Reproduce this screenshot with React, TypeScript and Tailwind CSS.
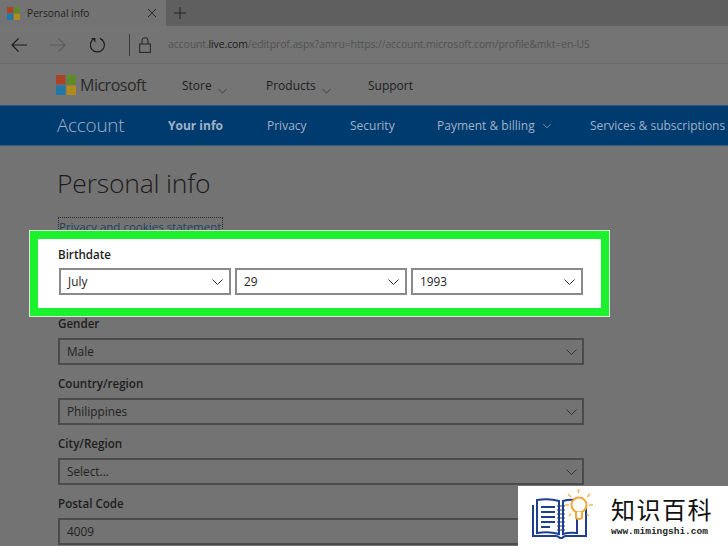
const sans = { fontFamily: '"Open Sans", "Noto Sans", sans-serif' };

function Chevron({ className = "stroke-[#333]" }: { className?: string }) {
  return (
    <svg width="11" height="6" viewBox="0 0 11 6" fill="none" className={className}>
      <path d="M.5 .5l5 5 5-5" strokeWidth="1" />
    </svg>
  );
}

function Select({ value, className = "" }: { value: string; className?: string }) {
  return (
    <div className={`h-[27px] flex items-center justify-between border-2 border-[#4b4b4b] pl-[7px] pr-[5px] text-[11.8px] text-[#222] ${className}`}>
      <span className="mt-[1px]">{value}</span>
      <Chevron />
    </div>
  );
}

function Field({ label, value, arrow = true }: { label: string; value: string; arrow?: boolean }) {
  return (
    <div className="flex flex-col h-[60px]">
      <div className="h-[23px] text-[11.6px] font-semibold text-[#1d1d1d] leading-[17px]">{label}</div>
      {arrow ? (
        <Select value={value} />
      ) : (
        <div className="h-[27px] flex items-center border-2 border-[#4b4b4b] pl-[7px] text-[11.8px] text-[#222]">{value}</div>
      )}
    </div>
  );
}

function WinLogo({ size }: { size: number }) {
  return (
    <svg width={size} height={size} viewBox="0 0 20 20">
      <rect width="9.5" height="9.5" fill="#a8432c" />
      <rect x="10.5" width="9.5" height="9.5" fill="#5f8a2a" />
      <rect y="10.5" width="9.5" height="9.5" fill="#1f78a8" />
      <rect x="10.5" y="10.5" width="9.5" height="9.5" fill="#b08a1c" />
    </svg>
  );
}

function TabStrip() {
  return (
    <div className="h-[26px] flex bg-[#5f5f5f]">
      <div className="w-[166px] flex items-center bg-[#737373] pl-[7px] pr-[9px]">
        <WinLogo size={13} />
        <span className="ml-[7px] mt-[1px] flex-1 text-[10.2px] text-[#222]">Personal info</span>
        <svg width="10" height="10" viewBox="0 0 10 10" stroke="#2a2a2a" strokeWidth="1"><path d="M1 1l8 8M9 1l-8 8" /></svg>
      </div>
      <div className="flex items-center pl-[8px]">
        <svg width="12" height="12" viewBox="0 0 12 12" stroke="#222" strokeWidth="1"><path d="M6 0v12M0 6h12" /></svg>
      </div>
    </div>
  );
}

function AddressBar() {
  return (
    <div className="h-[38px] flex items-center bg-[#747474] border-b border-[#6a6a6a] pl-[11px]">
      <svg width="16" height="14" viewBox="0 0 16 14" fill="none" stroke="#1c1c1c" strokeWidth="1.1"><path d="M16 7H1M7.5 .5L1 7l6.5 6.5" /></svg>
      <svg className="ml-[23px]" width="16" height="14" viewBox="0 0 16 14" fill="none" stroke="#5a5a5a" strokeWidth="1.1"><path d="M0 7h15M8.5 .5L15 7l-6.5 6.5" /></svg>
      <svg className="ml-[24px]" width="16" height="16" viewBox="0 0 16 16" fill="none" stroke="#1c1c1c" strokeWidth="1.2"><path d="M4.5 1.5A7 7 0 1 0 10 1.4M1.6 1.6l3.2 0 0 3.4" /></svg>
      <div className="ml-[23px] w-px h-[22px] bg-[#3c3c3c]" />
      <svg className="ml-[9px]" width="12" height="16" viewBox="0 0 12 16" fill="none" stroke="#2c2c2c" strokeWidth="1.1"><rect x=".6" y="7" width="10.8" height="8.4" /><path d="M3 7V3.8a3 3 0 0 1 6 0V7" /></svg>
      <div className="ml-[17px] mt-[1px] text-[10.45px] tracking-[-0.1px] text-[#525252] whitespace-nowrap">
        account.<span className="text-[#1a1a1a]">live.com</span>/editprof.aspx?amru=https://account.microsoft.com/profile&amp;mkt=en-US
      </div>
    </div>
  );
}

function SiteHeader() {
  return (
    <div className="h-[41px] flex items-center bg-[#757575] pl-[56px] text-[12px] text-[#1e1e1e]">
      <WinLogo size={20} />
      <span className="ml-[4px] w-[102px] text-[16px] font-medium tracking-[-0.5px] text-[#2a2a2a]">Microsoft</span>
      <span className="mt-[2px] flex items-end gap-[6px] w-[84px]">Store<Chevron className="stroke-[#333] mb-[1px] w-[9px]" /></span>
      <span className="mt-[2px] flex items-end gap-[6px] w-[102px]">Products<Chevron className="stroke-[#333] mb-[1px] w-[9px]" /></span>
      <span className="mt-[2px]">Support</span>
    </div>
  );
}

function AccountNav() {
  return (
    <div className="h-[41px] flex items-center overflow-hidden whitespace-nowrap bg-[#003b70] border-y border-[#2d5a82] pl-[57px] text-[12px] text-[#9fb2c6]">
      <span className="w-[111px] text-[19px] font-light tracking-[-0.3px]">Account</span>
      <span className="w-[99px] font-bold text-[12px]">Your info</span>
      <span className="w-[83px]">Privacy</span>
      <span className="w-[87px]">Security</span>
      <span className="w-[153px] flex items-center gap-[8px]">Payment &amp; billing<Chevron className="stroke-[#9fb2c6] w-[8px]" /></span>
      <span>Services &amp; subscriptions</span>
    </div>
  );
}

function Highlight() {
  return (
    <div className="absolute left-[29px] top-[230px] w-[581px] h-[87px] border border-[#d8f0d8]">
      <div className="h-full border-[8px] border-[#1bf22d] bg-white pl-[20px] pt-[6px] pr-[18px]">
        <div className="h-[23px] text-[11.6px] font-semibold text-[#1d1d1d] leading-[20px]">Birthdate</div>
        <div className="flex gap-[4px] text-[11.8px]">
          <HighlightSelect value="July" className="w-[172px] ml-[1px]" />
          <HighlightSelect value="29" className="w-[172px]" />
          <HighlightSelect value="1993" className="w-[172px]" />
        </div>
      </div>
    </div>
  );
}

function HighlightSelect({ value, className }: { value: string; className: string }) {
  return (
    <div className={`h-[27px] flex items-center justify-between border-2 border-[#8a8a8a] pl-[7px] pr-[6px] text-[#222] ${className}`}>
      <span className="mt-[1px]">{value}</span>
      <Chevron />
    </div>
  );
}

function WatermarkLogo() {
  return (
    <div className="absolute right-0 bottom-0 w-[210px] h-[60px] bg-white flex items-center pl-[14px]">
      <svg width="64" height="60" viewBox="0 0 64 60" fill="none">
        <path d="M1 19v31h23q2 0 4 2h2q2-2 4-2h20V19" stroke="#1e3f8f" strokeWidth="2" />
        <path d="M5 14q12-2 22 1v33q-10-3-22-1zM31 15q6-2 14-1v33q-8-1-14 1z" stroke="#1e3f8f" strokeWidth="2" />
        <path d="M9 21h14M9 26h14M9 31h14M9 36h14M9 41h9" stroke="#1e3f8f" strokeWidth="2.2" />
        <path d="M25 20h8M25 24h8M25 28h8M25 32h8M25 36h8M25 40h8M25 44h8" stroke="#1e3f8f" strokeWidth="1.2" />
        <circle cx="47" cy="19" r="7.5" fill="#fff" stroke="#f2a93b" strokeWidth="2" />
        <path d="M44 26v6q3 2 6 0v-6" fill="#fff" stroke="#f2a93b" strokeWidth="2" />
        <path d="M46.500 3v4M36 8l3 3M58 8l-3 3M33 19h4M57 19h4M37 30l2-2M57 30l-2-2" stroke="#f5b95c" strokeWidth="1.6" />
      </svg>
      <div className="ml-[15px] flex flex-col">
        <span className="text-[24px] leading-[30px] tracking-[1.5px] text-[#111]" style={{ fontFamily: '"Noto Sans CJK SC", sans-serif' }}>知识百科</span>
        <span className="text-[9.5px] leading-[12px] mt-[2px] text-[#222] font-semibold" style={{ fontFamily: '"Liberation Mono", monospace' }}>www.mimingshi.com</span>
      </div>
    </div>
  );
}

export default function App() {
  return (
    <div className="relative w-[728px] h-[546px] overflow-hidden bg-[#737373]" style={sans}>
      <TabStrip />
      <AddressBar />
      <SiteHeader />
      <AccountNav />
      <main className="pl-[58px] w-[584px]">
        <h1 className="mt-[16px] -ml-[1px] h-[42px] text-[26.500px] tracking-[-0.2px] leading-[42px] font-light text-[#1b1b1b]">Personal info</h1>
        <div className="mt-[13px] w-[165px] h-[24px] border border-dotted border-[#2a2a2a] text-[11.500px] leading-[17px] text-[#1f3f63] whitespace-nowrap">Privacy and cookies statement</div>
        <div className="mt-[74px]">
          <Field label="Gender" value="Male" />
          <Field label="Country/region" value="Philippines" />
          <Field label="City/Region" value="Select..." />
          <Field label="Postal Code" value="4009" arrow={false} />
        </div>
      </main>
      <Highlight />
      <WatermarkLogo />
    </div>
  );
}
